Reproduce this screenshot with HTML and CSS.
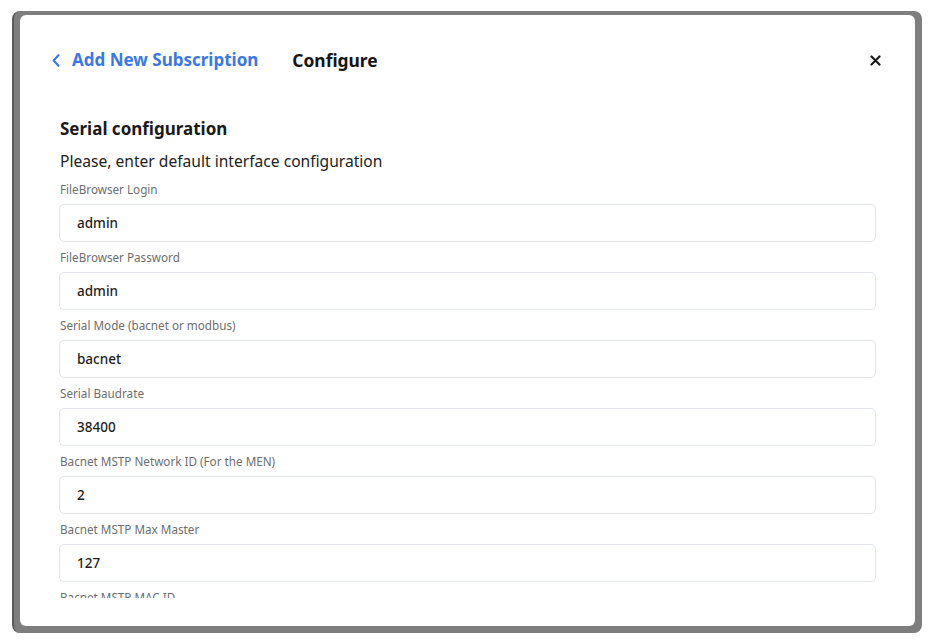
FILE: index.html
```html
<!DOCTYPE html>
<html lang="en">
<head>
<meta charset="utf-8">
<title>Configure</title>
<link rel="stylesheet" href="styles.css">
</head>
<body>
<div class="frame">
  <div class="modal">
    <header class="modal-header">
      <a class="back-link" href="#">
        <svg class="chevron" width="8" height="13" viewBox="0 0 8 13" aria-hidden="true"><path d="M6.5 1.2 1.6 6.5l4.9 5.3" fill="none" stroke="currentColor" stroke-width="2.1" stroke-linecap="round" stroke-linejoin="round"/></svg>
        <span>Add New Subscription</span>
      </a>
      <span class="step-title">Configure</span>
      <button class="close-btn" type="button" aria-label="Close">
        <svg width="11" height="11" viewBox="0 0 11 11" aria-hidden="true"><path d="M1.5 1.5l8 8M9.5 1.5l-8 8" stroke="currentColor" stroke-width="2.2" stroke-linecap="round"/></svg>
      </button>
    </header>
    <div class="modal-body">
      <h3 class="section-title">Serial configuration</h3>
      <p class="section-desc">Please, enter default interface configuration</p>
      <div class="field">
        <label class="field-label">FileBrowser Login</label>
        <div class="field-input">admin</div>
      </div>
      <div class="field">
        <label class="field-label">FileBrowser Password</label>
        <div class="field-input">admin</div>
      </div>
      <div class="field">
        <label class="field-label">Serial Mode (bacnet or modbus)</label>
        <div class="field-input">bacnet</div>
      </div>
      <div class="field">
        <label class="field-label">Serial Baudrate</label>
        <div class="field-input">38400</div>
      </div>
      <div class="field">
        <label class="field-label">Bacnet MSTP Network ID (For the MEN)</label>
        <div class="field-input">2</div>
      </div>
      <div class="field">
        <label class="field-label">Bacnet MSTP Max Master</label>
        <div class="field-input">127</div>
      </div>
      <div class="field">
        <label class="field-label">Bacnet MSTP MAC ID</label>
      </div>
    </div>
  </div>
</div>
</body>
</html>
```

FILE: styles.css
```css
* { box-sizing: border-box; }

html, body {
  margin: 0;
  padding: 0;
  background: #ffffff;
}

body {
  font-family: "Noto Sans", "Open Sans", sans-serif;
  color: #1c1c1c;
}

.frame {
  margin: 11px 0 0 12px;
  width: 910px;
  height: 622px;
  background: #7e7e7e;
  border-left: 2px solid #5c5c5c;
  border-radius: 8px;
  padding: 4px 7px 7px 6px;
}

.modal {
  background: #ffffff;
  border-radius: 6px;
  height: 100%;
  display: flex;
  flex-direction: column;
  padding-bottom: 28px;
}

.modal-header {
  height: 90px;
  flex: none;
  display: flex;
  align-items: flex-start;
  padding: 33px 33px 0 32px;
}

.back-link {
  display: flex;
  align-items: center;
  gap: 12px;
  color: #3b78e7;
  text-decoration: none;
  font-weight: 700;
  font-size: 17px;
  line-height: 24px;
}

.chevron { display: block; }

.step-title {
  margin-left: 34px;
  font-weight: 700;
  font-size: 17.4px;
  line-height: 24px;
  color: #141414;
}

.close-btn {
  margin-left: auto;
  border: 0;
  background: none;
  padding: 0;
  width: 14px;
  height: 24px;
  display: flex;
  align-items: center;
  justify-content: center;
  color: #1a1a1a;
}

.modal-body {
  flex: 1;
  overflow: hidden;
  padding: 0 39px;
}

.section-title {
  margin: 13px 0 0 1px;
  font-size: 17px;
  line-height: 22px;
  font-weight: 700;
  color: #1a1a1a;
}

.section-desc {
  margin: 10px 0 9px 1px;
  font-size: 15.6px;
  line-height: 22px;
  color: #222;
}

.field {
  display: flex;
  flex-direction: column;
  gap: 7px;
  margin-bottom: 7px;
}

.field-label {
  font-size: 11.7px;
  line-height: 16px;
  color: #6e6e6e;
  padding-left: 1px;
}

.field-input {
  height: 38px;
  border: 1px solid #e1e4e8;
  border-radius: 5px;
  padding: 0 17px;
  display: flex;
  align-items: center;
  font-size: 13.5px;
  font-weight: 500;
  color: #1e1e1e;
}
```
